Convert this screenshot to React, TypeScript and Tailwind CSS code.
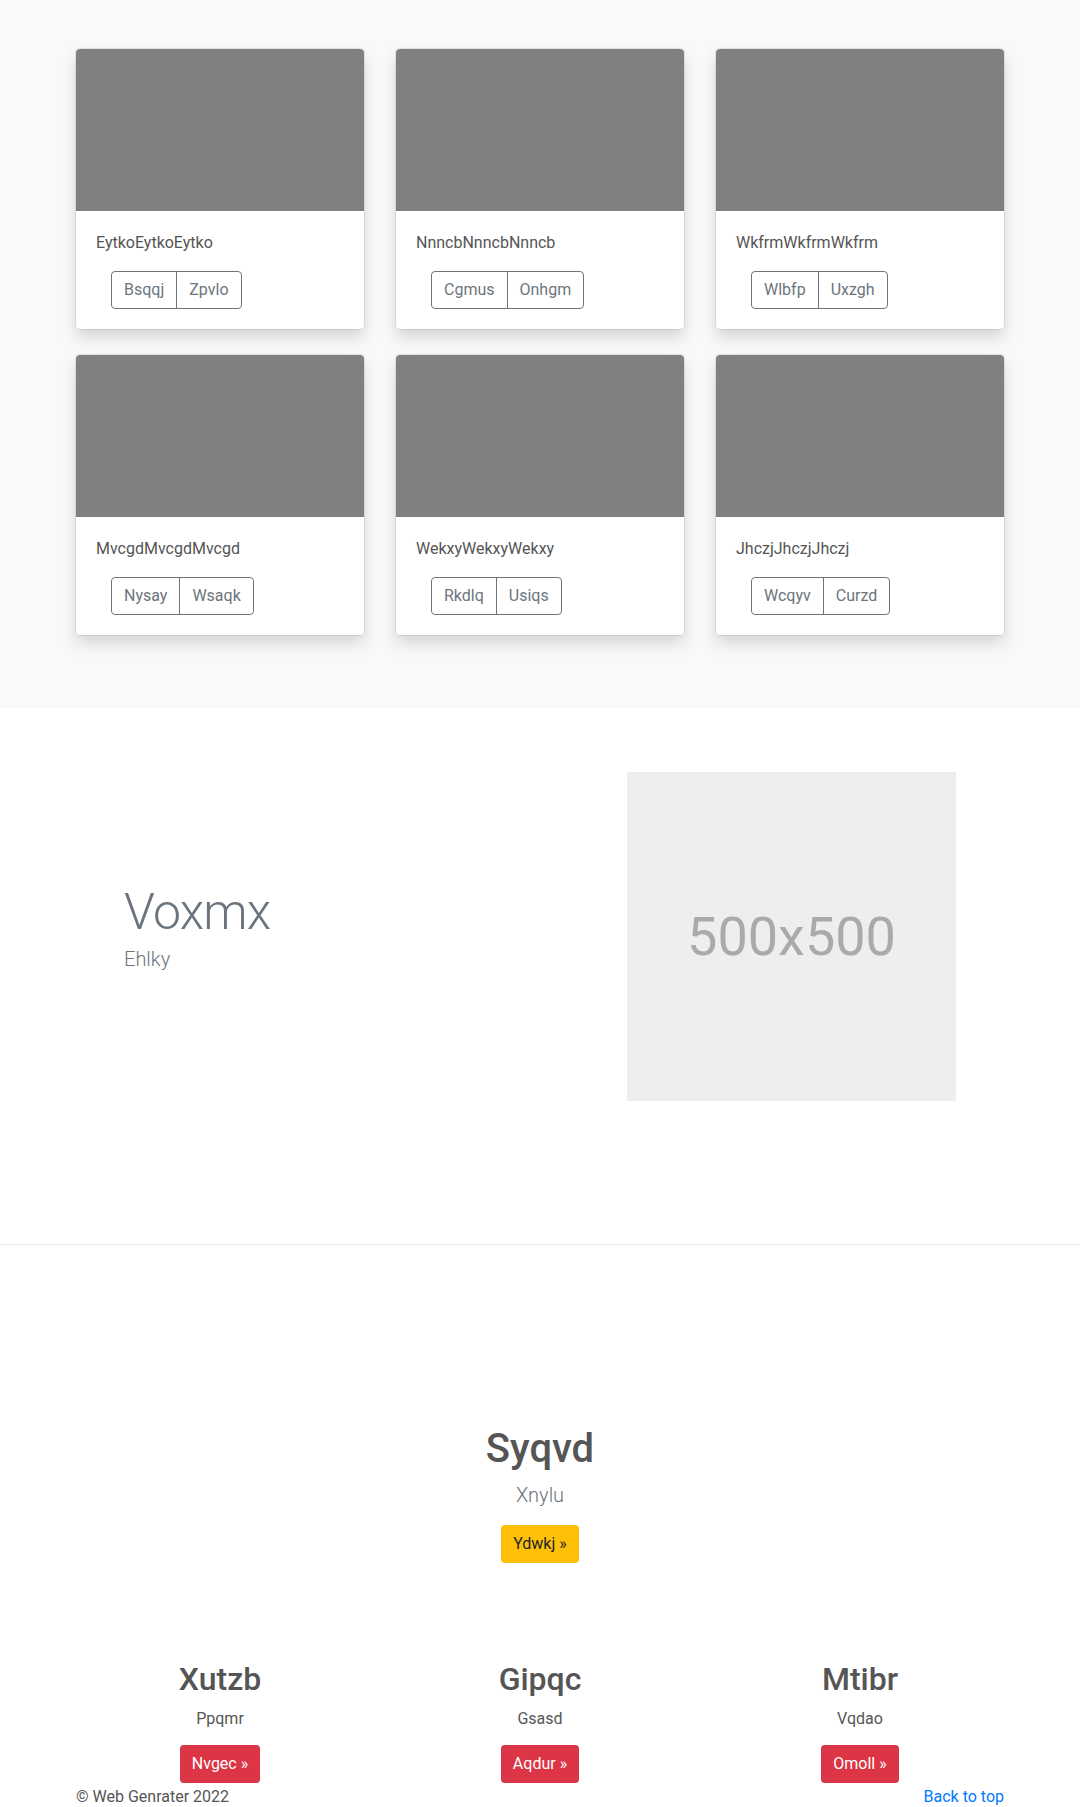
import React from "react";

const cards = [
  { title: "EytkoEytkoEytko", a: "Bsqqj", b: "Zpvlo" },
  { title: "NnncbNnncbNnncb", a: "Cgmus", b: "Onhgm" },
  { title: "WkfrmWkfrmWkfrm", a: "Wlbfp", b: "Uxzgh" },
  { title: "MvcgdMvcgdMvcgd", a: "Nysay", b: "Wsaqk" },
  { title: "WekxyWekxyWekxy", a: "Rkdlq", b: "Usiqs" },
  { title: "JhczjJhczjJhczj", a: "Wcqyv", b: "Curzd" },
];

const cols = [
  { h: "Xutzb", p: "Ppqmr", b: "Nvgec »" },
  { h: "Gipqc", p: "Gsasd", b: "Aqdur »" },
  { h: "Mtibr", p: "Vqdao", b: "Omoll »" },
];

function Card({ title, a, b }: { title: string; a: string; b: string }) {
  return (
    <div className="flex flex-col overflow-hidden rounded-[4px] bg-white shadow-[0_8px_16px_rgba(0,0,0,0.15)] ring-1 ring-[rgba(0,0,0,0.07)]">
      <div className="h-[162px] bg-[#808080]" />
      <div className="p-5">
        <p className="mb-4 text-[16px] leading-6 text-[#555]">{title}</p>
        <div className="ml-[15px] flex">
          <button className="h-[38px] rounded-l-[4px] border border-[#6c757d] px-3 text-[16px] text-[#6c757d]">{a}</button>
          <button className="-ml-px h-[38px] rounded-r-[4px] border border-[#6c757d] px-3 text-[16px] text-[#6c757d]">{b}</button>
        </div>
      </div>
    </div>
  );
}

export default function App() {
  return (
    <div className="min-h-[1807px] bg-white font-['Segoe_UI',Roboto,'Helvetica_Neue',Arial,sans-serif] text-[#555]">
      <section className="bg-[#f8f9fa] pt-[49px] pb-[73px]">
        <div className="mx-auto grid w-[928px] grid-cols-3 gap-x-8 gap-y-[26px]">
          {cards.map((c) => (
            <Card key={c.title} {...c} />
          ))}
        </div>
      </section>

      <section className="pt-[64px] pb-[143px]">
        <div className="mx-auto flex w-[928px] items-center justify-between px-12">
          <div className="pb-[17px]">
            <h2 className="text-[50px] font-light leading-[1.2] tracking-[-0.8px] text-[#6c757d]">Voxmx</h2>
            <p className="mt-[2px] text-[20px] font-light leading-[30px] text-[#6c757d]">Ehlky</p>
          </div>
          <div className="flex h-[329px] w-[329px] items-center justify-center bg-[#eeeeee]">
            <span className="text-[54px] text-[#aaaaaa]">500x500</span>
          </div>
        </div>
      </section>

      <hr className="border-0 border-t border-[#e5e5e5]" />

      <section className="pt-[180px] text-center">
        <h1 className="text-[40px] font-medium leading-[48px] text-[#555]">Syqvd</h1>
        <p className="mt-[7px] text-[20px] font-light leading-[30px] text-[#6c757d]">Xnylu</p>
        <button className="mt-[15px] h-[38px] rounded-[4px] bg-[#ffc107] px-3 text-[16px] text-[#212529]">Ydwkj »</button>
      </section>

      <section className="mt-[97px]">
        <div className="mx-auto grid w-[960px] grid-cols-3 text-center">
          {cols.map((c) => (
            <div key={c.h} className="flex flex-col items-center">
              <h2 className="text-[32px] font-medium leading-[38px] text-[#555]">{c.h}</h2>
              <p className="mt-[9px] text-[16px] leading-6 text-[#555]">{c.p}</p>
              <button className="mt-[14px] h-[38px] rounded-[4px] bg-[#dc3545] px-3 text-[16px] text-white">{c.b}</button>
            </div>
          ))}
        </div>
      </section>

      <footer className="mx-auto mt-[2px] flex w-[928px] justify-between text-[16px] leading-6">
        <p className="text-[#555]">© Web Genrater 2022</p>
        <a href="#" className="text-[#007bff]">Back to top</a>
      </footer>
    </div>
  );
}
